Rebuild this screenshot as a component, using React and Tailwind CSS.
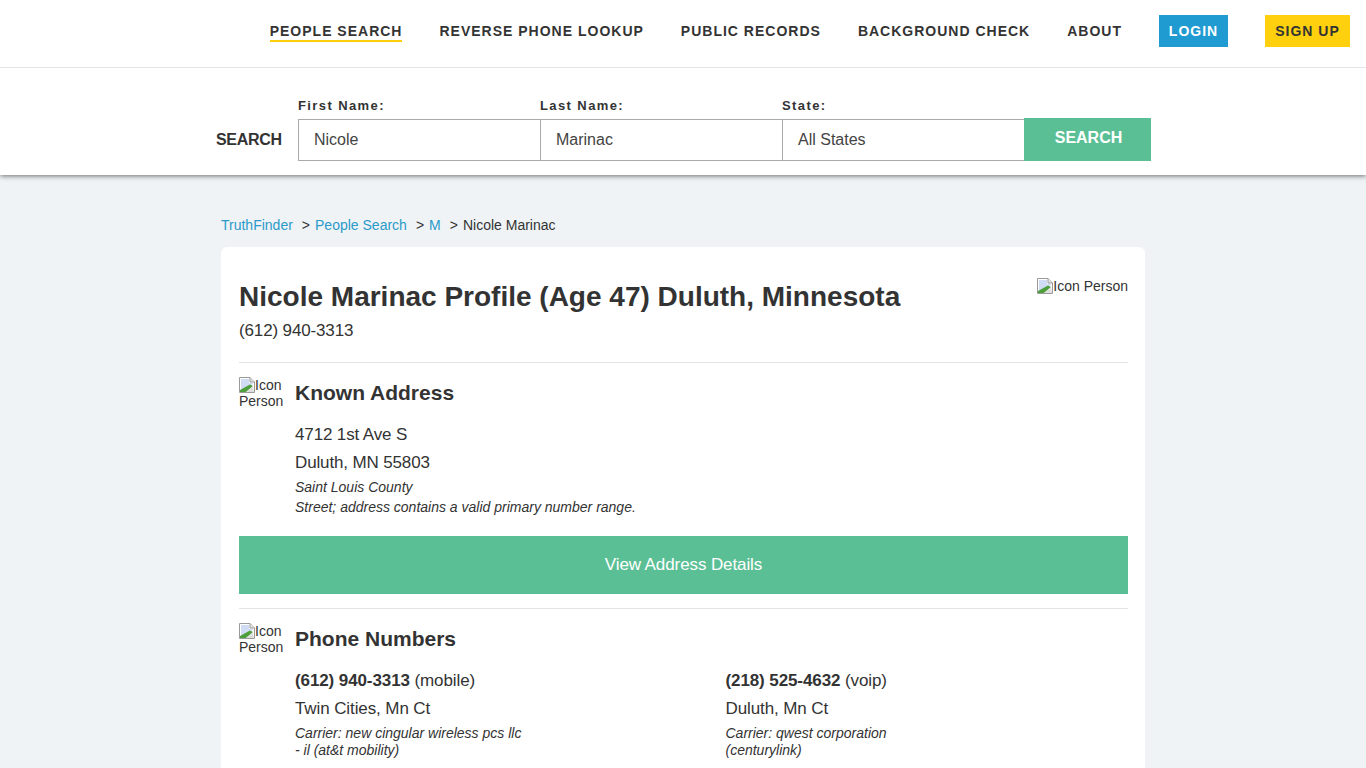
import React from 'react';

const navLinks = ['REVERSE PHONE LOOKUP', 'PUBLIC RECORDS', 'BACKGROUND CHECK', 'ABOUT'];

function BrokenImage() {
  return (
    <svg width="16" height="16" viewBox="0 0 16 16" className="inline-block align-top shrink-0">
      <path d="M0.5 0.5H11L15.5 5V15.5H0.5Z" fill="#fff" stroke="#9a9a9a" />
      <path d="M11 0.5V5H15.5" fill="#e4e4e4" stroke="#9a9a9a" />
      <path d="M2 2H10V6H14V7L2 13Z" fill="#cfdcf4" />
      <path d="M1 15V13L11 7.5L14 9L7 15Z" fill="#4f9e3c" />
      <path d="M7 15L14 9.5L15 15Z" fill="#dedede" />
    </svg>
  );
}

function SectionIcon() {
  return (
    <div className="w-11 shrink-0 text-sm leading-4 text-[#333]">
      <BrokenImage />Icon Person
    </div>
  );
}

function Field({ label, value }) {
  return (
    <div className="w-[242px]">
      <label className="block text-[13px] leading-4 font-bold tracking-[1.4px] text-[#333] mb-[5px] pt-px">{label}</label>
      <div className="h-[42px] -mr-px border border-[#aaa] flex items-center pl-[15px] text-base text-[#444] bg-white">{value}</div>
    </div>
  );
}

function PhoneBlock({ number, type, city, carrier, extra }) {
  return (
    <div className="w-[430.5px]">
      <p className="text-[17px] leading-7 tracking-[-0.1px]"><b>{number}</b> ({type})</p>
      <p className="text-[17px] leading-7 tracking-[-0.1px]">{city}</p>
      <p className="mt-[2px] text-sm leading-[17px] italic w-[240px]">{carrier}<br />{extra}</p>
    </div>
  );
}

export default function App() {
  return (
    <div className="h-[768px] overflow-hidden bg-[#eff3f6] text-[#333] font-['Liberation_Sans',Arial,sans-serif]">
      <header className="bg-white shadow-[0_1px_5px_rgba(0,0,0,0.55)] relative h-[175px]">
        <nav className="h-[68px] border-b border-[#e2e5e8] flex items-center justify-end gap-[37px] pr-4 pb-[6px] text-sm font-bold tracking-[1px] text-[#333]">
          <a className="border-b-2 border-[#ffce0a] leading-4 pt-[2px] pb-px mt-px">PEOPLE SEARCH</a>
          {navLinks.map((l) => (
            <a key={l} className="whitespace-nowrap">{l}</a>
          ))}
          <a className="w-[69px] h-8 bg-[#1f9bd1] text-white flex items-center justify-center">LOGIN</a>
          <a className="w-[85px] h-8 bg-[#ffd00d] flex items-center justify-center">SIGN UP</a>
        </nav>
        <div className="flex items-end pl-[216px] pt-[29px]">
          <span className="w-[82px] text-base leading-[42px] font-bold tracking-[-0.3px]">SEARCH</span>
          <Field label="First Name:" value="Nicole" />
          <Field label="Last Name:" value="Marinac" />
          <Field label="State:" value="All States" />
          <button className="w-[127px] h-[43px] pb-[3px] pl-[2px] bg-[#5abf95] text-white text-base font-bold">SEARCH</button>
        </div>
      </header>

      <main className="w-[924px] ml-[221px]">
        <div className="pt-[42px] h-[72px] text-sm leading-4 flex">
          <a className="text-[#2b9ac9]">TruthFinder</a>
          <span className="ml-[9px]">&gt;</span>
          <a className="ml-[5px] text-[#2b9ac9]">People Search</a>
          <span className="ml-[9px]">&gt;</span>
          <a className="ml-[5px] text-[#2b9ac9]">M</a>
          <span className="ml-[9px]">&gt;</span>
          <span className="ml-[5px]">Nicole Marinac</span>
        </div>

        <section className="bg-white rounded-md pl-[18px] pr-[17px] h-[600px]">
          <div className="flex justify-between h-[116px] border-b border-[#e2e5e8] pt-[32px]">
            <div>
              <h1 className="text-[28px] leading-9 font-bold">Nicole Marinac Profile (Age 47) Duluth, Minnesota</h1>
              <p className="text-[17px] leading-6 mt-[4px] tracking-[-0.14px]">(612) 940-3313</p>
            </div>
            <div className="text-sm leading-4 whitespace-nowrap flex items-start -mt-px"><BrokenImage />Icon Person</div>
          </div>

          <div className="pt-[14px] border-b border-[#e2e5e8] h-[246px]">
            <div className="flex gap-3">
              <SectionIcon />
              <div>
                <h2 className="text-[21px] leading-8 font-bold">Known Address</h2>
                <p className="text-[17px] leading-7 mt-[12px] tracking-[-0.14px]">4712 1st Ave S</p>
                <p className="text-[17px] leading-7 tracking-[-0.14px]">Duluth, MN 55803</p>
                <p className="text-sm leading-5 italic">Saint Louis County</p>
                <p className="text-sm leading-5 italic">Street; address contains a valid primary number range.</p>
              </div>
            </div>
            <a className="mt-[19px] h-[58px] bg-[#5abf95] text-white text-[17px] tracking-[-0.1px] flex items-center justify-center">View Address Details</a>
          </div>

          <div className="pt-[14px]">
            <div className="flex gap-3">
              <SectionIcon />
              <div>
                <h2 className="text-[21px] leading-8 font-bold">Phone Numbers</h2>
                <div className="flex mt-[12px]">
                  <PhoneBlock number="(612) 940-3313" type="mobile" city="Twin Cities, Mn Ct" carrier="Carrier: new cingular wireless pcs llc" extra="- il (at&t mobility)" />
                  <PhoneBlock number="(218) 525-4632" type="voip" city="Duluth, Mn Ct" carrier="Carrier: qwest corporation" extra="(centurylink)" />
                </div>
              </div>
            </div>
          </div>
        </section>
      </main>
    </div>
  );
}
